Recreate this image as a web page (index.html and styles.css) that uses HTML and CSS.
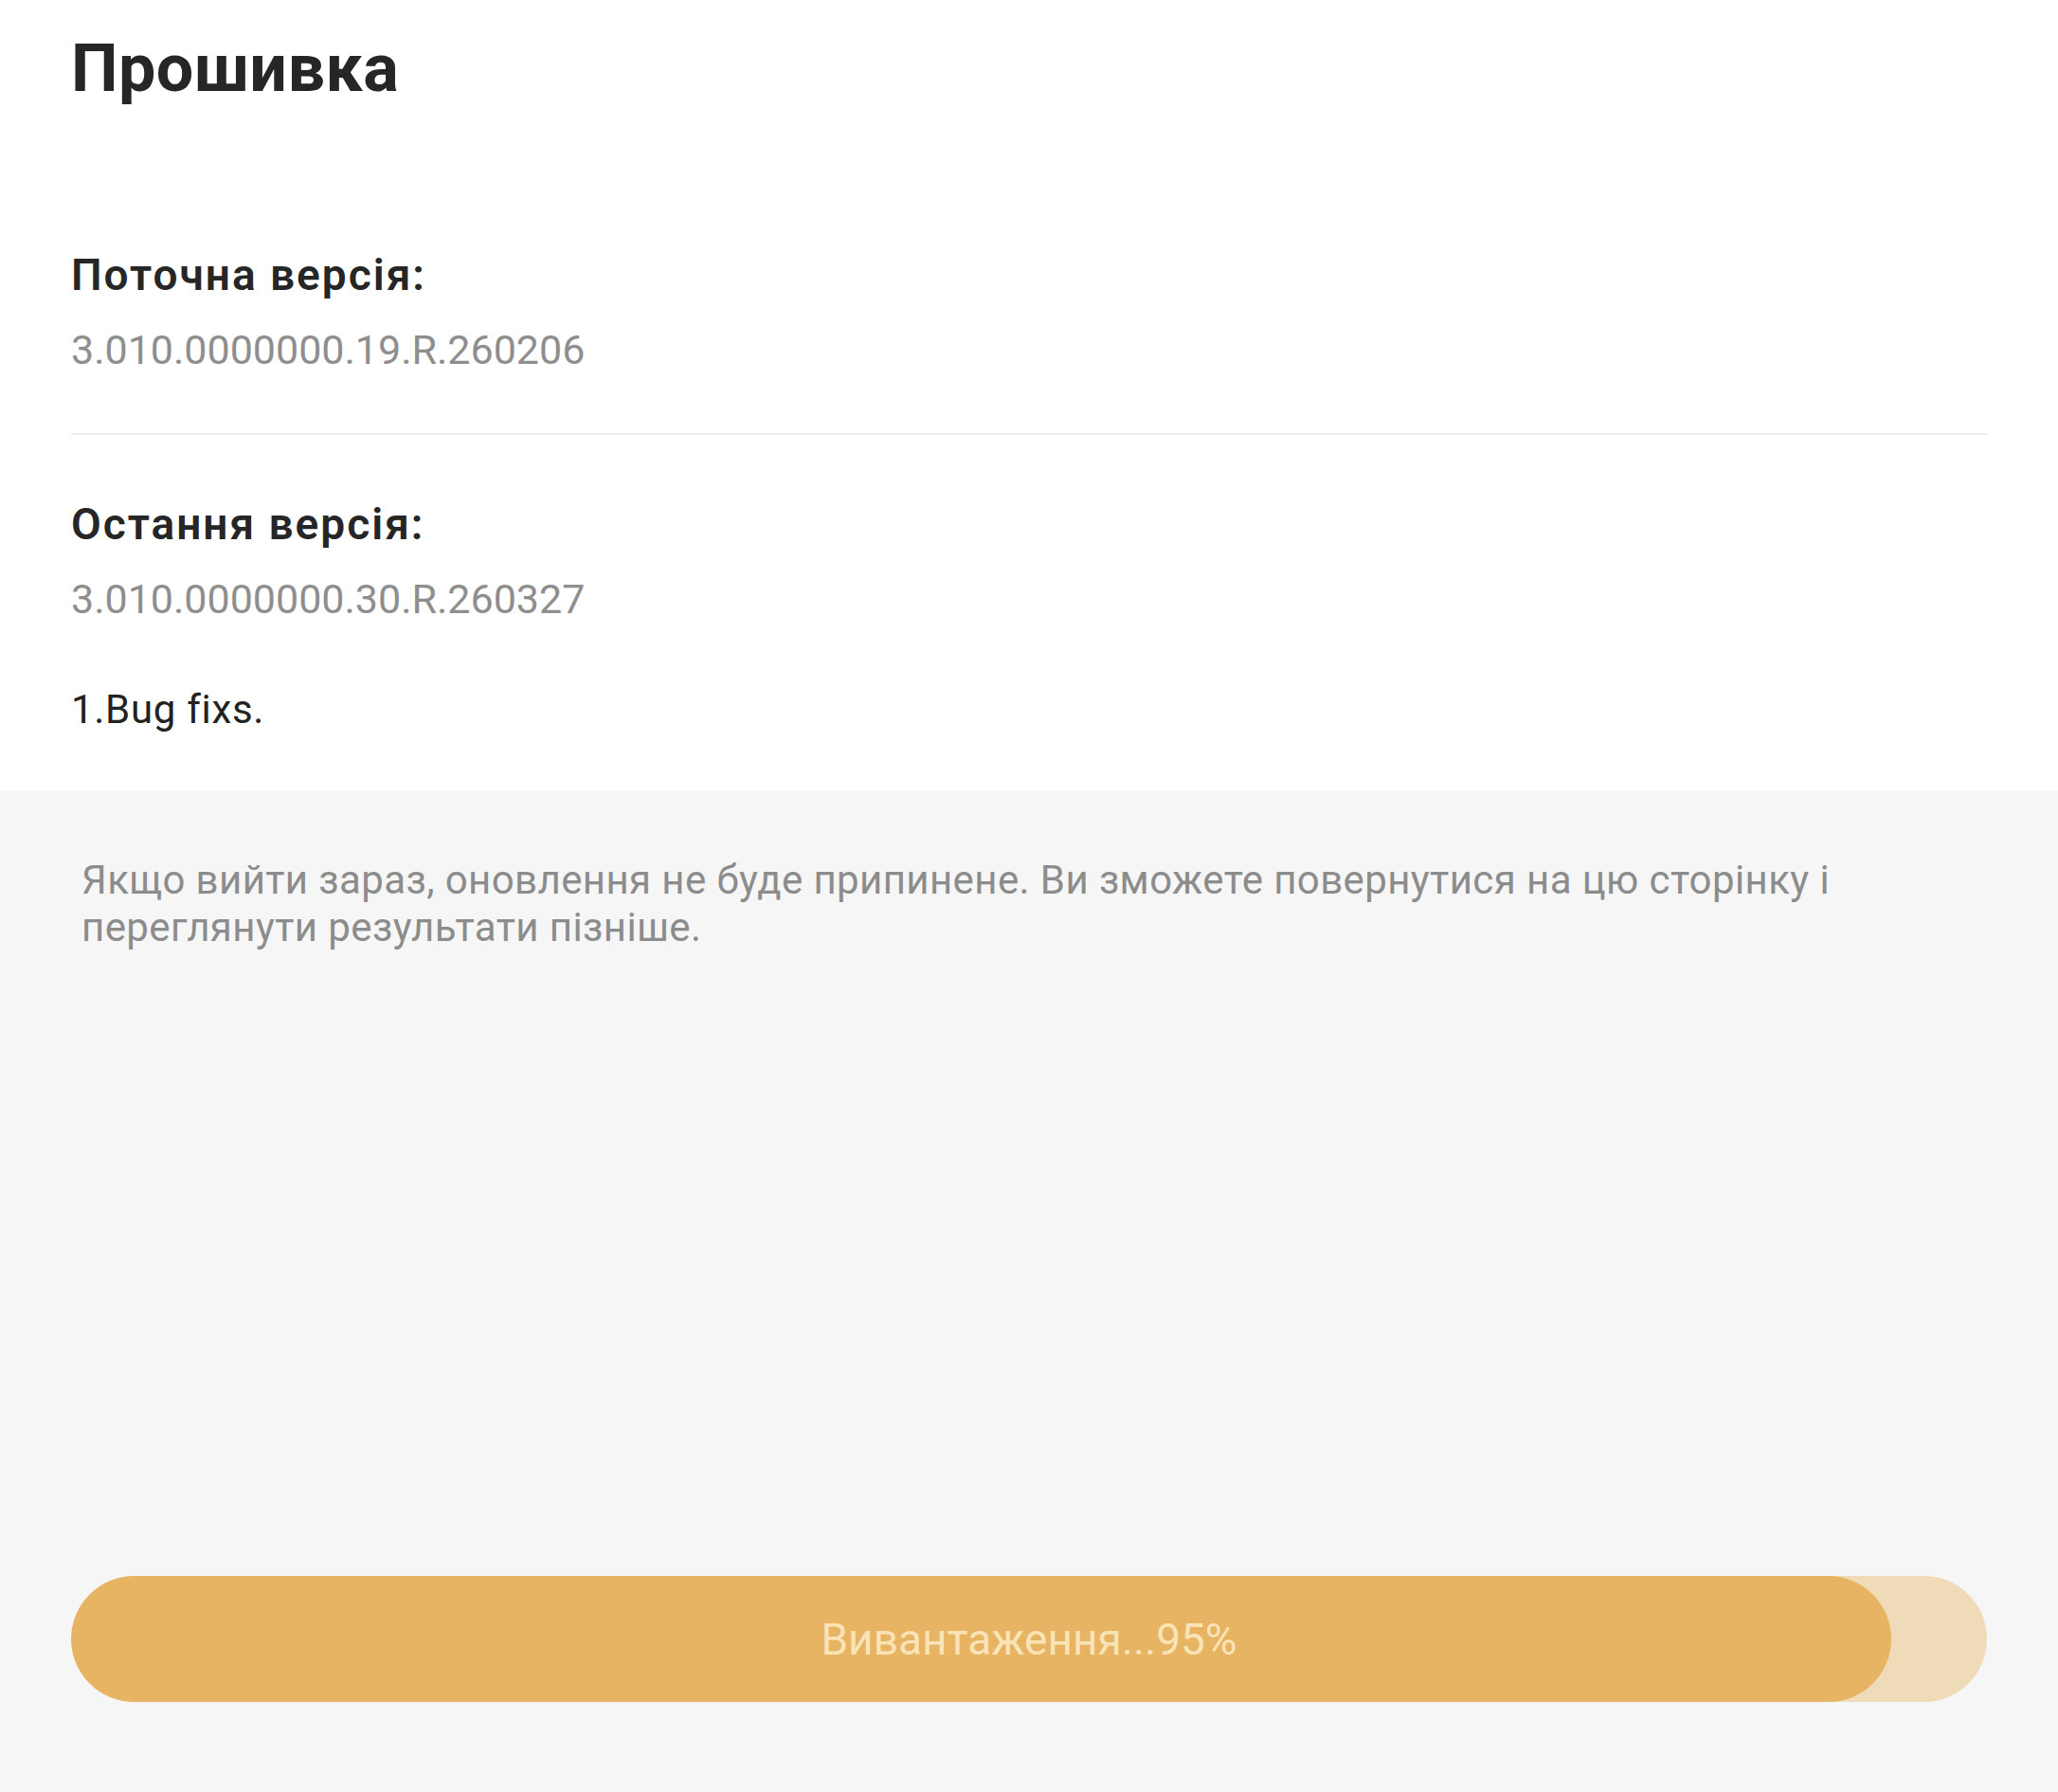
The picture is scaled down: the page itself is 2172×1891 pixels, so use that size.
FILE: index.html
```html
<!DOCTYPE html>
<html lang="uk">
<head>
    <meta charset="UTF-8">
    <meta name="viewport" content="width=device-width, initial-scale=1.0">
    <title>Прошивка</title>
    <link rel="stylesheet" href="styles.css">
</head>
<body>

<div class="page">
    <div class="card">
        <h1 class="title">Прошивка</h1>

        <div class="version-block">
            <div class="label">Поточна версія:</div>
            <div class="version">3.010.0000000.19.R.260206</div>
        </div>

        <div class="divider"></div>

        <div class="version-block latest">
            <div class="label">Остання версія:</div>
            <div class="version">3.010.0000000.30.R.260327</div>
            <div class="notes">1.Bug fixs.</div>
        </div>
    </div>

    <p class="hint">Якщо вийти зараз, оновлення не буде припинене. Ви зможете повернутися на цю сторінку і переглянути результати пізніше.</p>

    <div class="footer">
        <div class="progress">
            <div class="progress-fill" style="width: 95%"></div>
            <span class="progress-text">Вивантаження...95%</span>
        </div>
    </div>
</div>

</body>
</html>
```

FILE: styles.css
```css
* {
    box-sizing: border-box;
}
body {
    margin: 0;
    font-family: Roboto, "Noto Sans", Arial, sans-serif;
    background-color: #f6f6f6;
    color: #222222;
}
.page {
    min-height: 100vh;
    display: flex;
    flex-direction: column;
}
.card {
    background: white;
    padding: 30px 75px 58px;
}
.title {
    margin: 0;
    font-size: 70px;
    line-height: 84px;
    font-weight: 700;
    letter-spacing: 0.5px;
    color: #262626;
}
.version-block {
    margin-top: 148px;
}
.version-block.latest {
    margin-top: 66px;
}
.label {
    font-size: 46px;
    line-height: 56px;
    font-weight: 600;
    letter-spacing: 2px;
    color: #262626;
}
.version {
    margin-top: 23px;
    font-size: 43px;
    line-height: 56px;
    color: #8e8e8e;
}
.notes {
    margin-top: 61px;
    font-size: 42px;
    line-height: 56px;
    letter-spacing: 0.7px;
    color: #222222;
}
.divider {
    height: 2px;
    margin-top: 60px;
    background: #eeeeee;
}
.hint {
    margin: 69px 0 0;
    padding: 0 86px;
    font-size: 42px;
    line-height: 50px;
    letter-spacing: 0.4px;
    color: #8c8c8c;
}
.footer {
    margin-top: auto;
    padding: 0 75px 95px;
}
.progress {
    display: grid;
    height: 133px;
    border-radius: 67px;
    background: #f0dbb8;
    overflow: hidden;
}
.progress-fill,
.progress-text {
    grid-area: 1 / 1;
}
.progress-fill {
    height: 100%;
    border-radius: 67px;
    background: #e7b464;
}
.progress-text {
    align-self: center;
    justify-self: center;
    font-size: 46px;
    color: #fae3b6;
}
```
